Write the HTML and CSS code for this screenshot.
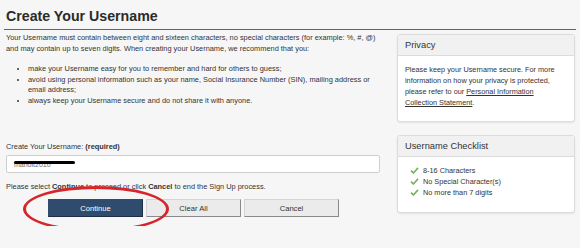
FILE: index.html
```html
<!DOCTYPE html>
<html>
<head>
<meta charset="utf-8">
<link rel="stylesheet" href="styles.css">
<title>Create Your Username</title>
</head>
<body>
<div class="page">
  <h1 class="title">Create Your Username</h1>
  <div class="cols">
    <div class="main">
      <p class="intro">Your Username must contain between eight and sixteen characters, no special characters (for example: %, #, @) and may contain up to seven digits. When creating your Username, we recommend that you:</p>
      <ul class="tips">
        <li>make your Username easy for you to remember and hard for others to guess;</li>
        <li>avoid using personal information such as your name, Social Insurance Number (SIN), mailing address or email address;</li>
        <li>always keep your Username secure and do not share it with anyone.</li>
      </ul>
      <label class="field-label" for="uname">Create Your Username: <b>(required)</b></label>
      <div class="field">
        <input id="uname" class="field-input" type="text" value="manoit2010">
        <span class="scribble"></span>
      </div>
      <p class="note">Please select <b>Continue</b> to proceed or click <b>Cancel</b> to end the Sign Up process.</p>
      <div class="actions">
        <button class="btn btn-primary">Continue</button>
        <button class="btn">Clear All</button>
        <button class="btn">Cancel</button>
        <span class="circle"></span>
      </div>
    </div>
    <div class="side">
      <div class="panel">
        <div class="panel-head">Privacy</div>
        <div class="panel-body">Please keep your Username secure. For more information on how your privacy is protected, please refer to our <a href="#">Personal Information Collection Statement</a>.</div>
      </div>
      <div class="panel">
        <div class="panel-head">Username Checklist</div>
        <ul class="checks">
          <li><svg class="tick" viewBox="0 0 10 8"><path d="M1 4.2 L3.8 6.8 L9 1" fill="none" stroke="#6fb35a" stroke-width="1.8"/></svg>8-16 Characters</li>
          <li><svg class="tick" viewBox="0 0 10 8"><path d="M1 4.2 L3.8 6.8 L9 1" fill="none" stroke="#6fb35a" stroke-width="1.8"/></svg>No Special Character(s)</li>
          <li><svg class="tick" viewBox="0 0 10 8"><path d="M1 4.2 L3.8 6.8 L9 1" fill="none" stroke="#6fb35a" stroke-width="1.8"/></svg>No more than 7 digits</li>
        </ul>
      </div>
    </div>
  </div>
</div>
</body>
</html>
```
FILE: styles.css
```css
body{
    margin:0;
    background:#f6f6f6;
    font-family:"Liberation Sans", Arial, sans-serif;
    color:#333;
}
.page{
    padding:0 4px;
}
.title{
    margin:0;
    padding:7px 2px 4px;
    font-size:14.2px;
    line-height:18px;
    color:#2b2b2b;
    border-bottom:1px solid #9c4b47;
}
.cols{
    display:flex;
    gap:17px;
}
.main{
    width:374px;
    padding-left:2px;
    position:relative;
    font-size:7.4px;
}
.intro{
    margin:2px 0 0;
    line-height:11px;
}
.tips{
    margin:10px 0 0;
    padding-left:22px;
    line-height:10.6px;
}
.field-label{
    display:block;
    margin-top:35px;
    line-height:11px;
}
.field-label b{
    font-weight:bold;
}
.field{
    position:relative;
    margin-top:3px;
}
.field-input{
    display:block;
    box-sizing:border-box;
    width:374px;
    height:18px;
    border:1px solid #cfcfcf;
    border-radius:2px;
    background:#fff;
    padding:0 7px;
    font-family:"Liberation Sans", Arial, sans-serif;
    font-size:7px;
    color:#666;
}
.scribble{
    position:absolute;
    left:8px;
    top:6px;
    width:61px;
    height:3px;
    border-radius:2px;
    background:#000;
}
.note{
    margin:8px 0 0;
    line-height:11px;
}
.actions{
    position:relative;
    display:flex;
    gap:3px;
    margin:7px 0 0 42px;
}
.btn{
    box-sizing:border-box;
    width:95px;
    height:18px;
    border:1px solid #d4d4d4;
    border-right-color:#8a8a8a;
    border-bottom-color:#8a8a8a;
    background:#ebebeb;
    font-family:"Liberation Sans", Arial, sans-serif;
    font-size:7.6px;
    color:#333;
    padding:0;
}
.btn-primary{
    background:#2f4b6d;
    border-color:#2f4b6d;
    border-right-color:#1d2f45;
    border-bottom-color:#1d2f45;
    color:#fff;
}
.circle{
    position:absolute;
    left:-25px;
    top:-13px;
    width:140px;
    height:40px;
    border:3px solid #d8242b;
    border-radius:50%;
}
.side{
    width:178px;
    padding-top:4px;
}
.panel{
    background:#fff;
    border:1px solid #dcdcdc;
    border-radius:3px;
    box-shadow:0 1px 2px rgba(0,0,0,0.08);
    margin-bottom:13px;
    font-size:7.3px;
}
.panel-head{
    height:20px;
    line-height:20px;
    padding-left:7px;
    background:#f1f1f1;
    border-bottom:1px solid #dcdcdc;
    font-size:9.3px;
    color:#333;
}
.panel-body{
    padding:8px 7px 13px;
    line-height:11px;
}
.panel-body a{
    color:#333;
}
.checks{
    list-style:none;
    margin:0;
    padding:8px 0 14px 12px;
    line-height:11px;
}
.checks li{
    display:flex;
    align-items:center;
}
.tick{
    width:9px;
    height:7px;
    margin-right:4px;
}
```
